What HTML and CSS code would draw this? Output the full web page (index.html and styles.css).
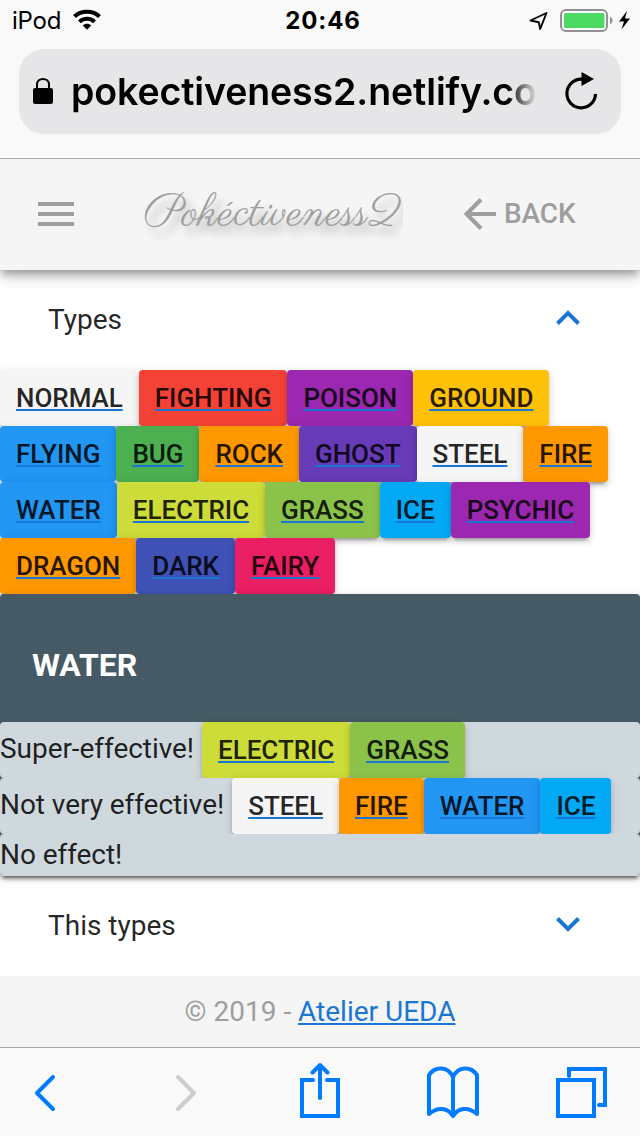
FILE: index.html
```html
<!DOCTYPE html>
<html lang="en">
<head>
<meta charset="utf-8">
<title>Pokéctiveness2</title>
<link rel="stylesheet" href="styles.css">
</head>
<body>
<div class="browser-top">
  <div class="status">
    <div class="carrier"><span>iPod</span>
      <svg width="28" height="21" viewBox="0 0 28 21"><g fill="none" stroke="#000" stroke-width="4"><path d="M1.500 7.500C8 1 20 1 26.500 7.500"/><path d="M6.500 12.800C10.500 8.800 17.500 8.800 21.500 12.800"/></g><path d="M9.800 16.500C12 14.200 16 14.200 18.200 16.500L14 20.800Z"/></svg>
    </div>
    <div class="clock">20:46</div>
    <div class="power">
      <svg width="102" height="24" viewBox="0 0 102 24"><path d="M2.500 12.500L18.500 5L12.200 21L10.800 14.200Z" fill="none" stroke="#000" stroke-width="1.900" stroke-linejoin="round"/><rect x="33" y="2" width="46" height="21" rx="5" fill="#fff" stroke="#929294" stroke-width="2"/><rect x="36" y="5" width="40.500" height="15" rx="1.500" fill="#4cd964"/><path d="M82 8.500Q87 12.500 82 16.500Z" fill="#929294"/><path d="M99 3L91 13.500H96L93.500 21.500L102 10.500H97Z"/></svg>
    </div>
  </div>
  <div class="address">
    <svg class="lock" width="20" height="28" viewBox="0 0 20 28"><path d="M4 12V7.500C4 0 16 0 16 7.500V12" fill="none" stroke="#000" stroke-width="2"/><rect y="11" width="20" height="16" rx="2"/></svg>
    <div class="url">pokectiveness2.netlify.co</div>
    <svg class="reload" width="34" height="38" viewBox="0 0 34 38"><path d="M30.500 22A14.300 14.300 0 1 1 16.500 7.200H19" fill="none" stroke="#000" stroke-width="3.200"/><path d="M16.500 0V14L29 7Z"/></svg>
  </div>
</div>
<header class="appbar">
  <svg class="menu" width="36" height="24" viewBox="0 0 36 24" fill="#9e9e9e"><path d="M0 0H36V4H0ZM0 10H36V14H0ZM0 20H36V24H0Z"/></svg>
  <div class="brand">Pokéctiveness2</div>
  <div class="back"><svg width="32" height="32" viewBox="0 0 32 32"><path d="M32 16H3M17 1.500L2.500 16L17 30.500" fill="none" stroke="#9e9e9e" stroke-width="4"/></svg><span>BACK</span></div>
</header>
<main>
  <div class="panel-head"><span>Types</span><svg width="24" height="16" viewBox="0 0 24 16"><path d="M1.500 13.500L12 3L22.500 13.500" fill="none" stroke="#1976d2" stroke-width="4"/></svg></div>
  <div class="types">
    <div class="row"><a class="btn grey">NORMAL</a><a class="btn red">FIGHTING</a><a class="btn purple">POISON</a><a class="btn amber">GROUND</a></div>
    <div class="row"><a class="btn blue">FLYING</a><a class="btn green">BUG</a><a class="btn orange">ROCK</a><a class="btn deep">GHOST</a><a class="btn grey">STEEL</a><a class="btn orange">FIRE</a></div>
    <div class="row"><a class="btn blue">WATER</a><a class="btn lime">ELECTRIC</a><a class="btn light">GRASS</a><a class="btn sky">ICE</a><a class="btn purple">PSYCHIC</a></div>
    <div class="row"><a class="btn orange">DRAGON</a><a class="btn indigo">DARK</a><a class="btn pink">FAIRY</a></div>
  </div>
  <section class="card">
    <h2>WATER</h2>
    <div class="effect"><span>Super-effective!</span><a class="btn lime">ELECTRIC</a><a class="btn light">GRASS</a></div>
    <div class="effect"><span>Not very effective!</span><a class="btn grey">STEEL</a><a class="btn orange">FIRE</a><a class="btn blue">WATER</a><a class="btn sky">ICE</a></div>
    <div class="effect none"><span>No effect!</span></div>
  </section>
  <div class="panel-head"><span>This types</span><svg width="24" height="16" viewBox="0 0 24 16"><path d="M1.500 2.500L12 13L22.500 2.500" fill="none" stroke="#1976d2" stroke-width="4"/></svg></div>
</main>
<footer><span>© 2019 - <a class="link">Atelier UEDA</a></span></footer>
<nav class="toolbar">
  <svg viewBox="0 0 640 88" width="640" height="88" fill="none" stroke="#007aff" stroke-width="4" stroke-linecap="round" stroke-linejoin="round">
    <path d="M53 29L37 45L53 61"/>
    <path d="M178 29L194 45L178 61" stroke="#ccc"/>
    <path stroke-linejoin="miter" d="M313 32H302V68H338V32H327"/><path d="M320 50V17M312.500 24.500L320 17L327.500 24.500"/>
    <path d="M453 68V29C448 18 435 18 429 27V66C438 58 448 60 453 68C458 60 468 58 477 66V27C471 18 458 18 453 29"/>
    <path stroke-linejoin="miter" d="M558 32H594V68H558ZM569 28V21H605V57H599"/>
  </svg>
</nav>
</body>
</html>
```
FILE: styles.css
```css
* { box-sizing: border-box; }
body { margin: 0; width: 640px; height: 1136px; overflow: hidden; display: flex; flex-direction: column; background: #fff; font-family: Roboto, sans-serif; font-size: 28px; color: rgba(0,0,0,.87); }
svg { display: block; flex: none; }
.browser-top { position: relative; z-index: 3; height: 159px; flex: none; background: #f9f9f9; border-bottom: 1px solid #a9a9a9; color: #000; font-family: Inter, sans-serif; }
.status { height: 49px; display: grid; grid-template-columns: 1fr auto 1fr; align-items: start; padding: 0 10px 0 12px; }
.carrier { display: flex; gap: 12px; font-size: 24px; line-height: 42px; letter-spacing: -.2px; }
.carrier svg { margin-top: 9px; }
.clock { margin-left: 4px; font-size: 24px; font-weight: 700; line-height: 42px; letter-spacing: .9px; }
.power { justify-self: end; padding-top: 8px; }
.address { height: 85px; margin: 0 19px; padding: 0 23px 0 14px; display: flex; align-items: center; border-radius: 25px; background: #e6e6e8; }
.lock { margin-top: -1px; }
.url { width: 466px; margin-left: 18px; white-space: nowrap; font-size: 37.5px; font-weight: 600; line-height: 89px; letter-spacing: -.12px; -webkit-mask-image: linear-gradient(90deg, #000 436px, transparent 466px); mask-image: linear-gradient(90deg, #000 436px, transparent 466px); }
.reload { margin: -1px 0 0 28px; }
.appbar { height: 111px; flex: none; padding: 0 38px 2px; display: flex; align-items: center; position: relative; z-index: 2; background: #f5f5f5; color: #9e9e9e; box-shadow: 0 4px 8px -2px rgba(0,0,0,.3), 0 8px 10px rgba(0,0,0,.14), 0 2px 20px rgba(0,0,0,.12); }
.brand { width: 259px; margin-left: 70px; padding-top: 2px; white-space: nowrap; font-family: Parisienne, cursive; font-size: 44px; line-height: 56px; letter-spacing: .65px; text-shadow: 6px 8px 8px rgba(0,0,0,.28); clip-path: inset(-10px 0 -16px -10px); }
.back { margin-left: 61px; display: flex; align-items: center; gap: 8px; font-weight: 500; letter-spacing: -.1px; }
.panel-head { height: 100px; padding: 0 60px 2px 48px; display: flex; align-items: center; justify-content: space-between; }
.panel-head svg { margin-top: -2px; }
.row, .effect { display: flex; height: 56px; }
.btn { height: 56px; padding: 0 16px; border-radius: 4px; font-size: 26px; font-weight: 500; line-height: 56px; letter-spacing: -.03px; white-space: nowrap; text-decoration: underline 2px #1976d2; text-underline-offset: 2px; text-decoration-skip-ink: none; box-shadow: 0 6px 2px -4px rgba(0,0,0,.2), 0 4px 4px rgba(0,0,0,.14), 0 2px 10px rgba(0,0,0,.12); }
.grey { background: #f5f5f5; }
.red { background: #f44336; }
.purple { background: #9c27b0; }
.amber { background: #ffc107; }
.blue { background: #2196f3; }
.green { background: #4caf50; }
.orange { background: #ff9800; }
.deep { background: #673ab7; }
.lime { background: #cddc39; }
.light { background: #8bc34a; }
.sky { background: #03a9f4; }
.indigo { background: #3f51b5; }
.pink { background: #e91e63; }
.card { position: relative; border-radius: 4px; background: #455a64; box-shadow: 0 6px 2px -4px rgba(0,0,0,.3), 0 3px 4px rgba(0,0,0,.35), 0 2px 10px rgba(0,0,0,.12); }
h2 { height: 128px; margin: 0; padding: 7px 32px; font-size: 32px; font-weight: 700; line-height: 128px; color: #fff; }
.effect { position: relative; border-radius: 4px; background: #cfd8dd; line-height: 54px; }
.effect span { margin-right: 8px; letter-spacing: -.05px; }
.none { height: 42px; line-height: 42px; }
footer { height: 71px; flex: none; text-align: center; line-height: 71px; background: #f5f5f5; color: #9e9e9e; }
.link { color: #1976d2; text-decoration: underline 2px; text-underline-offset: 2px; text-decoration-skip-ink: none; }
.toolbar { height: 89px; flex: none; border-top: 1px solid #a9a9a9; background: #f9f9f9; }
```
